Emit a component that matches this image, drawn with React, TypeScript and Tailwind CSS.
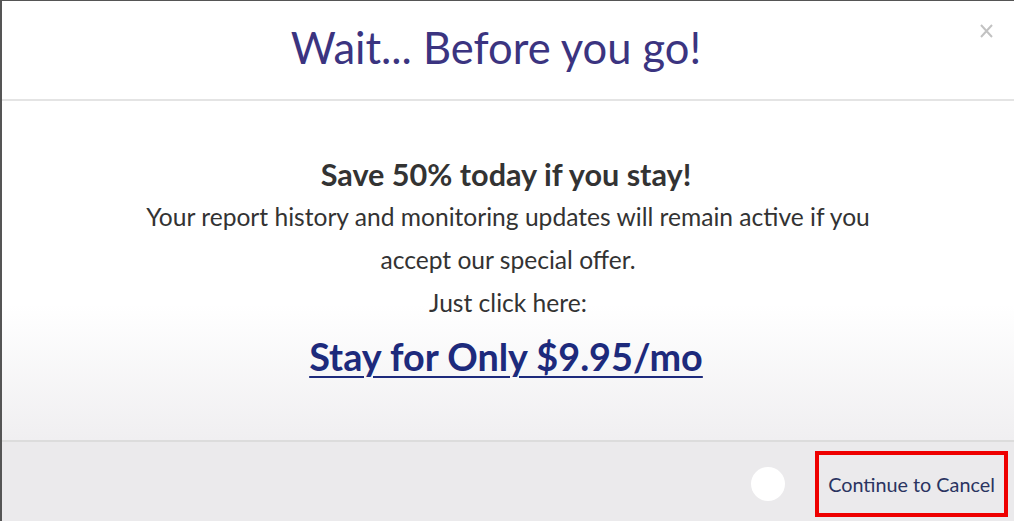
import React from "react";

export default function App() {
  return (
    <div className="w-[1014px] h-[521px] overflow-hidden border-t border-l-2 border-[#555] bg-white flex flex-col" style={{ fontFamily: "Lato, 'Open Sans', sans-serif" }}>
      <div className="relative h-[100px] shrink-0 flex items-center justify-center border-b-2 border-[#e4e4e4]">
        <h1 className="text-[43.5px] leading-none text-[#3b3480] pb-[4px] pr-[24px]">Wait... Before you go!</h1>
        <svg className="absolute right-[21px] top-[23px]" width="13" height="14" viewBox="0 0 13 14">
          <path d="M1 1 L12 13 M12 1 L1 13" stroke="#c2c2c2" strokeWidth="2" fill="none" />
        </svg>
      </div>
      <div className="h-[339px] shrink-0 flex flex-col items-center bg-gradient-to-b from-white from-60% to-[#f0eff1] pt-[54px]">
        <div className="text-[30.6px] font-bold text-[#333] leading-[40px] pr-[4px]">Save 50% today if you stay!</div>
        <div className="text-[24.6px] text-[#333] leading-[43px] text-center w-[760px]">
          Your report history and monitoring updates will remain active if you accept our special offer.
        </div>
        <div className="text-[24.6px] text-[#333] leading-[43px]">Just click here:</div>
        <a className="text-[37.8px] font-bold text-[#1d2a7c] underline decoration-2 underline-offset-[5px] leading-[52px] mt-[7px] pr-[4px]">Stay for Only $9.95/mo</a>
      </div>
      <div className="flex-1 border-t-2 border-[#dcdcdc] bg-[#ebeaec] flex items-center justify-end pr-[6px]">
        <div className="w-[34px] h-[34px] rounded-full bg-white mr-[30px] mt-[4px]" />
        <div className="border-4 border-[#ee0000] w-[193px] h-[66px] flex items-center justify-center pt-[3px] mt-[4px]">
          <span className="text-[19.8px] text-[#2a3461]">Continue to Cancel</span>
        </div>
      </div>
    </div>
  );
}
